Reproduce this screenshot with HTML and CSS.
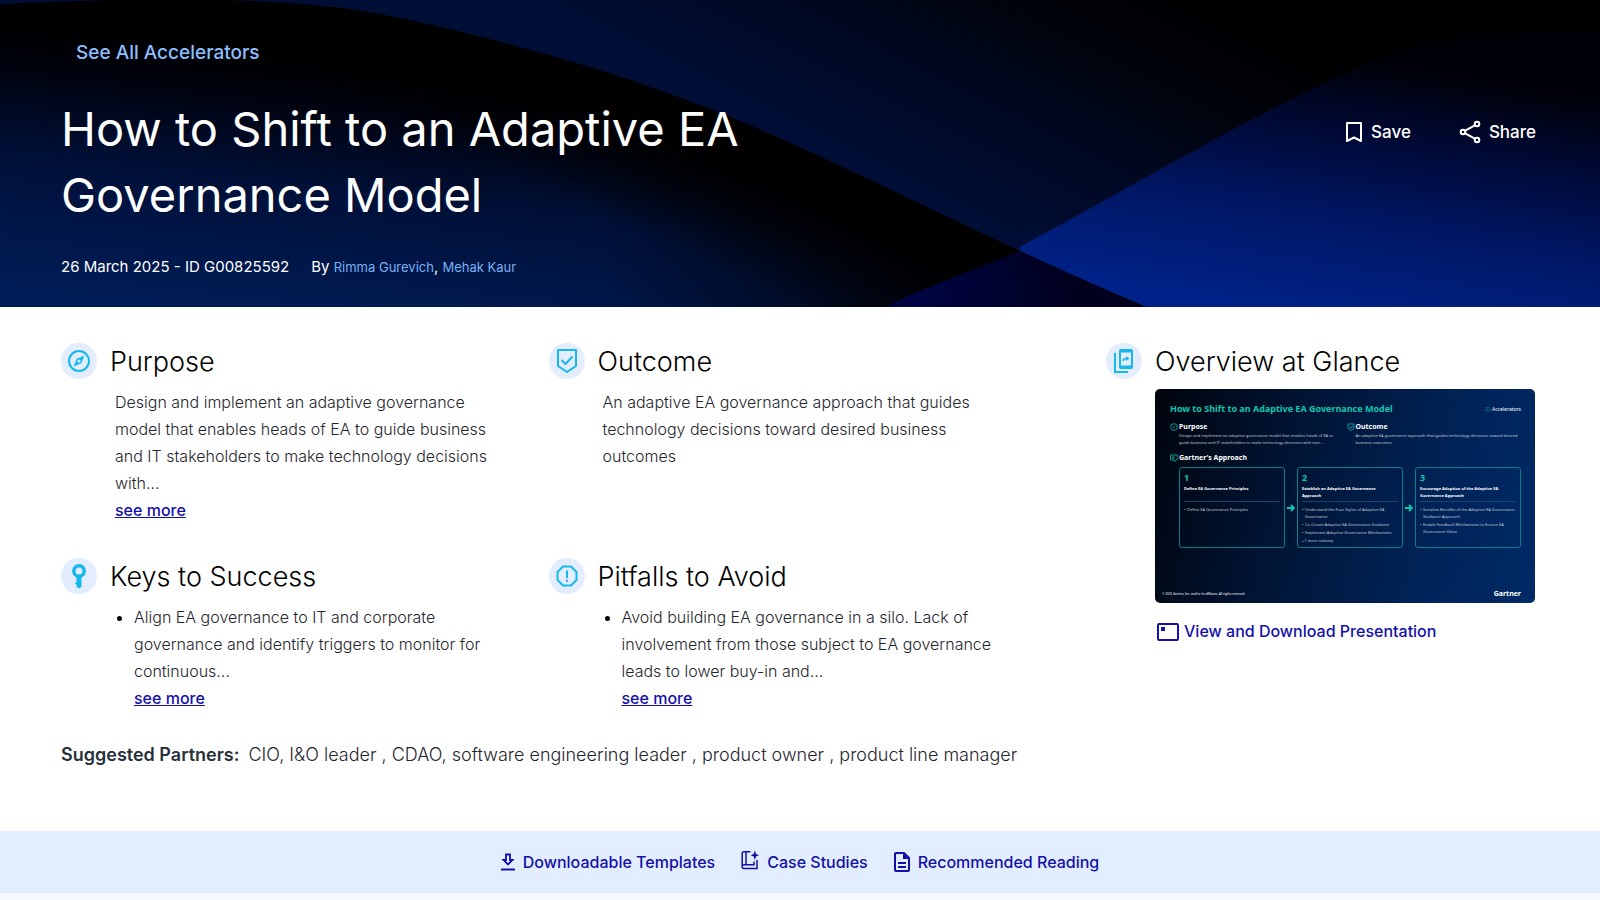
FILE: index.html
```html
<!DOCTYPE html>
<html lang="en">
<head>
  <meta charset="UTF-8">
  <meta name="viewport" content="width=device-width, initial-scale=1.0">
  <title>How to Shift to an Adaptive EA Governance Model</title>
  <link rel="stylesheet" href="styles.css">
</head>
<body>
  <!-- Hero -->
  <header class="hero">
    <svg class="hero-bg" viewBox="0 0 1600 306" preserveAspectRatio="none" aria-hidden="true">
      <defs>
        <linearGradient id="upper" gradientUnits="userSpaceOnUse" x1="960" y1="220" x2="1100" y2="-60">
          <stop offset="0" stop-color="#000e36"/>
          <stop offset="0.4" stop-color="#000820"/>
          <stop offset="0.7" stop-color="#00030a"/>
          <stop offset="1" stop-color="#000001"/>
        </linearGradient>
        <linearGradient id="right" gradientUnits="userSpaceOnUse" x1="1250" y1="306" x2="1290" y2="50">
          <stop offset="0" stop-color="#002288"/>
          <stop offset="0.4" stop-color="#001662"/>
          <stop offset="0.7" stop-color="#000a38"/>
          <stop offset="1" stop-color="#000108"/>
        </linearGradient>
        <linearGradient id="left" gradientUnits="userSpaceOnUse" x1="300" y1="320" x2="330" y2="60">
          <stop offset="0" stop-color="#001c56"/>
          <stop offset="0.5" stop-color="#001038"/>
          <stop offset="0.85" stop-color="#00020c"/>
          <stop offset="1" stop-color="#000000"/>
        </linearGradient>
        <linearGradient id="shade" gradientUnits="userSpaceOnUse" x1="600" y1="0" x2="950" y2="0">
          <stop offset="0" stop-color="#000006" stop-opacity="0"/>
          <stop offset="1" stop-color="#000006" stop-opacity="0.85"/>
        </linearGradient>
        <linearGradient id="edge" gradientUnits="userSpaceOnUse" x1="740" y1="278" x2="800" y2="147">
          <stop offset="0" stop-color="#000000" stop-opacity="0"/>
          <stop offset="0.7" stop-color="#000000" stop-opacity="0.95"/>
          <stop offset="1" stop-color="#000000"/>
        </linearGradient>
        <linearGradient id="corner" gradientUnits="userSpaceOnUse" x1="930" y1="306" x2="1080" y2="270">
          <stop offset="0" stop-color="#000440"/>
          <stop offset="1" stop-color="#00001c"/>
        </linearGradient>
      </defs>
      <rect width="1600" height="306" fill="url(#upper)"/>
      <path d="M1020 246 C1130 188 1280 96 1400 50 C1480 30 1560 30 1600 30 V306 H1020 Z" fill="url(#right)"/>
      <path d="M0 4 C220 -6 330 2 400 18 C570 55 690 96 800 147 C900 192 1030 258 1146 306 H0 Z" fill="url(#left)"/>
      <path d="M0 4 C220 -6 330 2 400 18 C570 55 690 96 800 147 C900 192 1030 258 1146 306 H0 Z" fill="url(#shade)"/>
      <path d="M0 4 C220 -6 330 2 400 18 C570 55 690 96 800 147 C900 192 1030 258 1146 306 H0 Z" fill="url(#edge)"/>
      <path d="M1020 250 L915 292 L885 306 H1143 Z" fill="url(#corner)"/>
    </svg>

    <div class="hero-content">
      <a href="#" class="see-all">See All Accelerators</a>
      <div class="hero-row">
        <h1>How to Shift to an Adaptive EA Governance Model</h1>
        <div class="actions">
          <button type="button">
            <svg width="18" height="22" viewBox="0 0 18 22" fill="none" stroke="currentColor" stroke-width="2"><path d="M2 2H16V20L9 16.500L2 20Z" stroke-linejoin="round"/></svg>
            Save
          </button>
          <button type="button">
            <svg width="22" height="24" viewBox="0 0 22 24" fill="none" stroke="currentColor" stroke-width="2"><circle cx="4" cy="12" r="2.300"/><circle cx="18" cy="4" r="2.300"/><circle cx="18" cy="20" r="2.300"/><path d="M6.200 10.700L15.800 5.300M6.200 13.300L15.800 18.700"/></svg>
            Share
          </button>
        </div>
      </div>
      <div class="meta">
        <span>26 March 2025 - ID G00825592</span>
        <span>By <a href="#">Rimma Gurevich</a>, <a href="#">Mehak Kaur</a></span>
      </div>
    </div>
  </header>

  <main class="content">
    <div class="summary">
      <!-- Purpose -->
      <section class="block">
        <span class="icon">
          <svg width="24" height="24" viewBox="0 0 24 24" fill="none" stroke="currentColor" stroke-width="2"><circle cx="12" cy="12" r="10"/><path d="M17.500 6.500L14.300 14.300L6.500 17.500L9.700 9.700Z" fill="currentColor" stroke="none"/><circle cx="12" cy="12" r="1.600" fill="#e3edff" stroke="none"/></svg>
        </span>
        <div>
          <h2>Purpose</h2>
          <div class="text">
            <p>Design and implement an adaptive governance model that enables heads of EA to guide business and IT stakeholders to make technology decisions with...</p>
            <a href="#" class="more">see more</a>
          </div>
        </div>
      </section>

      <!-- Outcome -->
      <section class="block">
        <span class="icon">
          <svg width="24" height="26" viewBox="0 0 24 26" fill="none" stroke="currentColor" stroke-width="2"><path d="M3 2H21V18L12 24L3 18Z" stroke-linejoin="round"/><path d="M6.500 12L10.500 16L17.500 8.500"/></svg>
        </span>
        <div>
          <h2>Outcome</h2>
          <div class="text">
            <p>An adaptive EA governance approach that guides technology decisions toward desired business outcomes</p>
          </div>
        </div>
      </section>

      <!-- Keys to Success -->
      <section class="block">
        <span class="icon">
          <svg width="16" height="26" viewBox="0 0 16 26" fill="none"><circle cx="8" cy="8" r="5.200" stroke="currentColor" stroke-width="3.400"/><path d="M5.500 13H10.500V23.500L8.500 25.500L5 23.500L6 22L4 20.500L5.500 18.800Z" fill="currentColor"/></svg>
        </span>
        <div>
          <h2>Keys to Success</h2>
          <ul class="text">
            <li>Align EA governance to IT and corporate governance and identify triggers to monitor for continuous...<br><a href="#" class="more">see more</a></li>
          </ul>
        </div>
      </section>

      <!-- Pitfalls to Avoid -->
      <section class="block">
        <span class="icon">
          <svg width="24" height="24" viewBox="0 0 24 24" fill="none" stroke="currentColor" stroke-width="2"><path d="M8 2.500H16L21.500 8V16L16 21.500H8L2.500 16V8Z" stroke-linejoin="round"/><path d="M12 6.500V14M12 15.700V17.700"/></svg>
        </span>
        <div>
          <h2>Pitfalls to Avoid</h2>
          <ul class="text">
            <li>Avoid building EA governance in a silo. Lack of involvement from those subject to EA governance leads to lower buy-in and...<br><a href="#" class="more">see more</a></li>
          </ul>
        </div>
      </section>
    </div>

    <!-- Overview -->
    <section class="block overview">
      <span class="icon">
        <svg width="22" height="26" viewBox="0 0 22 26" fill="none" stroke="currentColor" stroke-width="2"><rect x="7" y="2" width="12" height="18" rx="1"/><path d="M7 3H19M7 19H19" stroke-width="3"/><path d="M2 5V24H15"/><path d="M10 13C10 11 11.500 10.500 13.500 10.500" stroke-width="1.500"/><path d="M13 8L16.500 10.500L13 13Z" fill="currentColor" stroke="none"/></svg>
      </span>
      <div>
        <h2>Overview at Glance</h2>
        <div class="slide">
          <div class="slide-top">
            <strong class="slide-title">How to Shift to an Adaptive EA Governance Model</strong>
            <span class="slide-brand"><i>ID</i> Accelerators</span>
          </div>
          <div class="slide-summary">
            <div>
              <h3><svg width="8" height="8" viewBox="0 0 8 8" fill="none" stroke="currentColor"><circle cx="4" cy="4" r="3.300"/><path d="M3 5L5 3"/></svg>Purpose</h3>
              <p>Design and implement an adaptive governance model that enables heads of EA to guide business and IT stakeholders to make technology decisions with mor...</p>
            </div>
            <div>
              <h3><svg width="8" height="8" viewBox="0 0 8 8" fill="none" stroke="currentColor"><path d="M1 1H7V5.500L4 7.300L1 5.500ZM2.500 3.500L4 5L6 3"/></svg>Outcome</h3>
              <p>An adaptive EA governance approach that guides technology decisions toward desired business outcomes</p>
            </div>
          </div>
          <h3><svg width="8" height="8" viewBox="0 0 8 8" fill="none" stroke="currentColor"><path d="M7.500 3V1H0.500V6H4L5 7.500L7.500 4M2 3H5M2 4.500H4"/></svg>Gartner's Approach</h3>
          <div class="steps">
            <div class="step">
              <b>1</b>
              <h4>Define EA Governance Principles</h4>
              <ul><li>Define EA Governance Principles</li></ul>
            </div>
            <svg class="arrow" width="8" height="8" viewBox="0 0 8 8" fill="none" stroke="currentColor" stroke-width="1.800"><path d="M0 4H7M4 1L7 4L4 7"/></svg>
            <div class="step">
              <b>2</b>
              <h4>Establish an Adaptive EA Governance Approach</h4>
              <ul><li>Understand the Four Styles of Adaptive EA Governance</li><li>Co-Create Adaptive EA Governance Guidance</li><li>Implement Adaptive Governance Mechanisms</li></ul>
              <small>+1 more substep</small>
            </div>
            <svg class="arrow" width="8" height="8" viewBox="0 0 8 8" fill="none" stroke="currentColor" stroke-width="1.800"><path d="M0 4H7M4 1L7 4L4 7"/></svg>
            <div class="step">
              <b>3</b>
              <h4>Encourage Adoption of the Adaptive EA Governance Approach</h4>
              <ul><li>Socialize Benefits of the Adaptive EA Governance Guidance Approach</li><li>Enable Feedback Mechanisms to Ensure EA Governance Value</li></ul>
            </div>
          </div>
          <div class="slide-foot">
            <span>© 2025 Gartner, Inc. and/or its affiliates. All rights reserved.</span>
            <strong>Gartner</strong>
          </div>
        </div>
        <a href="#" class="download">
          <svg width="22" height="18" viewBox="0 0 22 18" fill="none" stroke="currentColor" stroke-width="2"><rect x="1" y="1" width="20" height="16" rx="1"/><rect x="4" y="4" width="4" height="4" fill="currentColor" stroke="none"/></svg>
          View and Download Presentation
        </a>
      </div>
    </section>

    <p class="partners"><strong>Suggested Partners:</strong> CIO, I&amp;O leader , CDAO, software engineering leader , product owner , product line manager</p>
  </main>

  <!-- Resource links -->
  <nav class="resources">
    <a href="#">
      <svg width="14" height="18" viewBox="0 0 14 18" fill="none" stroke="currentColor" stroke-width="2"><path d="M5 1.500H9V7H11.500L7 11.500L2.500 7H5Z" stroke-width="1.800"/><path d="M0 16.500H14"/></svg>
      Downloadable Templates
    </a>
    <a href="#">
      <svg class="raised" width="18" height="20" viewBox="0 0 18 20" fill="none" stroke="currentColor" stroke-width="1.500"><path d="M9.500 1.700H3C1.800 1.700 1.200 2.500 1.200 3.500V16.500C1.200 17.700 2 18.500 3 18.500H16V10M5 1.700V14.500M13 14.700H3C1.800 14.700 1.200 15.600 1.200 16.600M13 11.500V15.400"/><path d="M13.800 0.500L15 4L18 5.200L15 6.400L13.800 10L12.600 6.400L9.600 5.200L12.600 4Z" fill="currentColor" stroke="none"/></svg>
      Case Studies
    </a>
    <a href="#">
      <svg width="16" height="20" viewBox="0 0 16 20" fill="none" stroke="currentColor" stroke-width="2"><path d="M1 2C1 1.400 1.400 1 2 1H10L15 6V18C15 18.600 14.600 19 14 19H2C1.400 19 1 18.600 1 18Z"/><path d="M9 1V7H15" fill="currentColor" stroke="none"/><path d="M4 11H12M4 15H12"/></svg>
      Recommended Reading
    </a>
  </nav>
</body>
</html>
```
FILE: styles.css
```css
* {
  box-sizing: border-box;
}

body {
  margin: 0;
  font-family: Inter, "Liberation Sans", sans-serif;
  font-size: 16px;
  line-height: 27px;
  color: #1f262e;
  background-color: #f5f8fc;
}

h1, h2, h3, h4, p, ul {
  margin: 0;
  padding: 0;
}

svg {
  display: block;
  flex: none;
}

/* Hero */
.hero {
  position: relative;
  background-color: #000617;
  color: #fff;
}

.hero-bg {
  position: absolute; /* Sits behind the heading */
  top: 0;
  left: 0;
  width: 100%;
  height: 100%;
}

.hero-content {
  position: relative;
  padding: 40px 64px 26px 61px;
}

.see-all {
  display: inline-block;
  margin-left: 15px;
  font-size: 19px;
  line-height: 26px;
  font-weight: 500;
  color: #8cbfff;
  text-decoration: none;
}

.hero-row {
  display: flex;
  justify-content: space-between;
  align-items: flex-start;
  margin-top: 29px;
}

h1 {
  max-width: 740px;
  font-size: 47px;
  line-height: 66px;
  font-weight: 400;
}

.actions {
  display: flex;
  gap: 48px;
  padding-top: 22px;
}

.actions button {
  display: flex;
  align-items: center;
  gap: 8px;
  padding: 0;
  border: none;
  background: none;
  color: #fff;
  font-family: inherit;
  font-size: 17px;
  font-weight: 500;
  line-height: 28px;
  cursor: pointer;
}

.meta {
  display: flex;
  gap: 22px;
  margin-top: 25px;
  font-size: 15px;
}

.meta a {
  font-size: 13px;
  color: #79b2f5;
  text-decoration: none;
}

/* Main content */
.content {
  display: grid;
  grid-template-columns: 25fr 11fr;
  column-gap: 70px;
  padding: 33px 65px 63px 61px;
  background-color: #fff;
}

.summary {
  display: grid;
  grid-template-columns: 1fr 1fr;
  row-gap: 31px;
}

.block {
  display: flex;
  align-items: flex-start;
  gap: 13px;
}

.icon {
  display: flex;
  flex: none;
  align-items: center;
  justify-content: center;
  width: 36px;
  height: 36px;
  margin-top: 3px;
  border-radius: 50%;
  background-color: #e3edff;
  color: #14b8ea;
}

h2 {
  font-size: 27px;
  line-height: 44px;
  font-weight: 300;
  color: #000;
}

.text {
  margin-top: 5px;
  padding: 0 50px 0 5px;
  font-weight: 300;
}

ul.text {
  padding: 0 32px 0 24px;
}

.text li::marker {
  color: #000;
}

.more {
  font-weight: 500;
  color: #1310a8;
}

.partners {
  grid-column: 1 / -1;
  margin-top: 29px;
  font-size: 18px;
  font-weight: 300;
}

.partners strong {
  margin-right: 4px;
  font-weight: 600;
  color: #28303a;
}

/* Overview slide */
.overview > div {
  flex: 1;
}

.slide {
  display: flex;
  flex-direction: column;
  aspect-ratio: 380 / 214;
  margin-top: 5px;
  padding: 13px 14px 4px 15px;
  border-radius: 5px;
  background: linear-gradient(105deg, #00040c 0%, #001434 35%, #00245a 75%, #002a66 100%);
  color: #fff;
  font-family: "Noto Sans", sans-serif;
  font-size: 4px;
  line-height: 7px;
}

.slide-top {
  display: flex;
  justify-content: space-between;
  align-items: center;
}

.slide-title {
  font-size: 9px;
  line-height: 14px;
  color: #0cc6ae;
}

.slide-brand {
  font-size: 5px;
}

.slide-brand i {
  font-style: normal;
  color: #0a8f8a;
}

.slide-summary {
  display: grid;
  grid-template-columns: 1fr 1fr;
  gap: 2px;
  margin-top: 7px;
}

.slide h3 {
  display: flex;
  align-items: center;
  gap: 1px;
  font-size: 7px;
  line-height: 8px;
}

.slide h3 svg {
  color: #0a9c92;
}

.slide-summary p {
  padding: 1px 0 0 9px;
  color: #c0cad8;
}

.slide-summary + h3 {
  margin-top: 8px;
}

.steps {
  display: flex;
  align-items: center;
  gap: 2px;
  margin: 5px 0 0 9px;
}

.step {
  flex: 1;
  min-height: 81px;
  padding: 5px 4px 2px;
  border: 1px solid #087f86;
  border-radius: 3px;
}

.step b {
  display: block;
  font-size: 9px;
  line-height: 10px;
  color: #0cc6ae;
}

.step h4 {
  min-height: 19px;
  padding: 2px 6px 0 0;
  border-bottom: 1px solid #16466a;
}

.step ul {
  padding: 4px 0 0 3px;
  list-style: none;
  color: #c0cad8;
}

.step li {
  margin-bottom: 1px;
}

.step li::before {
  content: "•";
  float: left;
  margin-left: -3px;
}

.step small {
  display: block;
  font-size: 4px;
  color: #c0cad8;
}

.arrow {
  color: #0cc6ae;
}

.slide-foot {
  display: flex;
  justify-content: space-between;
  align-items: center;
  margin: auto 0 0 -8px;
}

.slide-foot span {
  font-size: 3px;
}

.slide-foot strong {
  font-size: 7px;
  line-height: 10px;
}

.download {
  display: flex;
  align-items: center;
  gap: 5px;
  margin-top: 15px;
  padding-left: 2px;
  font-weight: 500;
  color: #1310a8;
  text-decoration: none;
}

/* Resource links */
.resources {
  display: flex;
  justify-content: center;
  align-items: center;
  gap: 26px;
  height: 62px;
  background-color: #e2eeff;
}

.resources a {
  display: flex;
  align-items: center;
  gap: 8px;
  font-weight: 500;
  color: #1310a8;
  text-decoration: none;
}

.raised {
  margin-bottom: 4px;
}
```
